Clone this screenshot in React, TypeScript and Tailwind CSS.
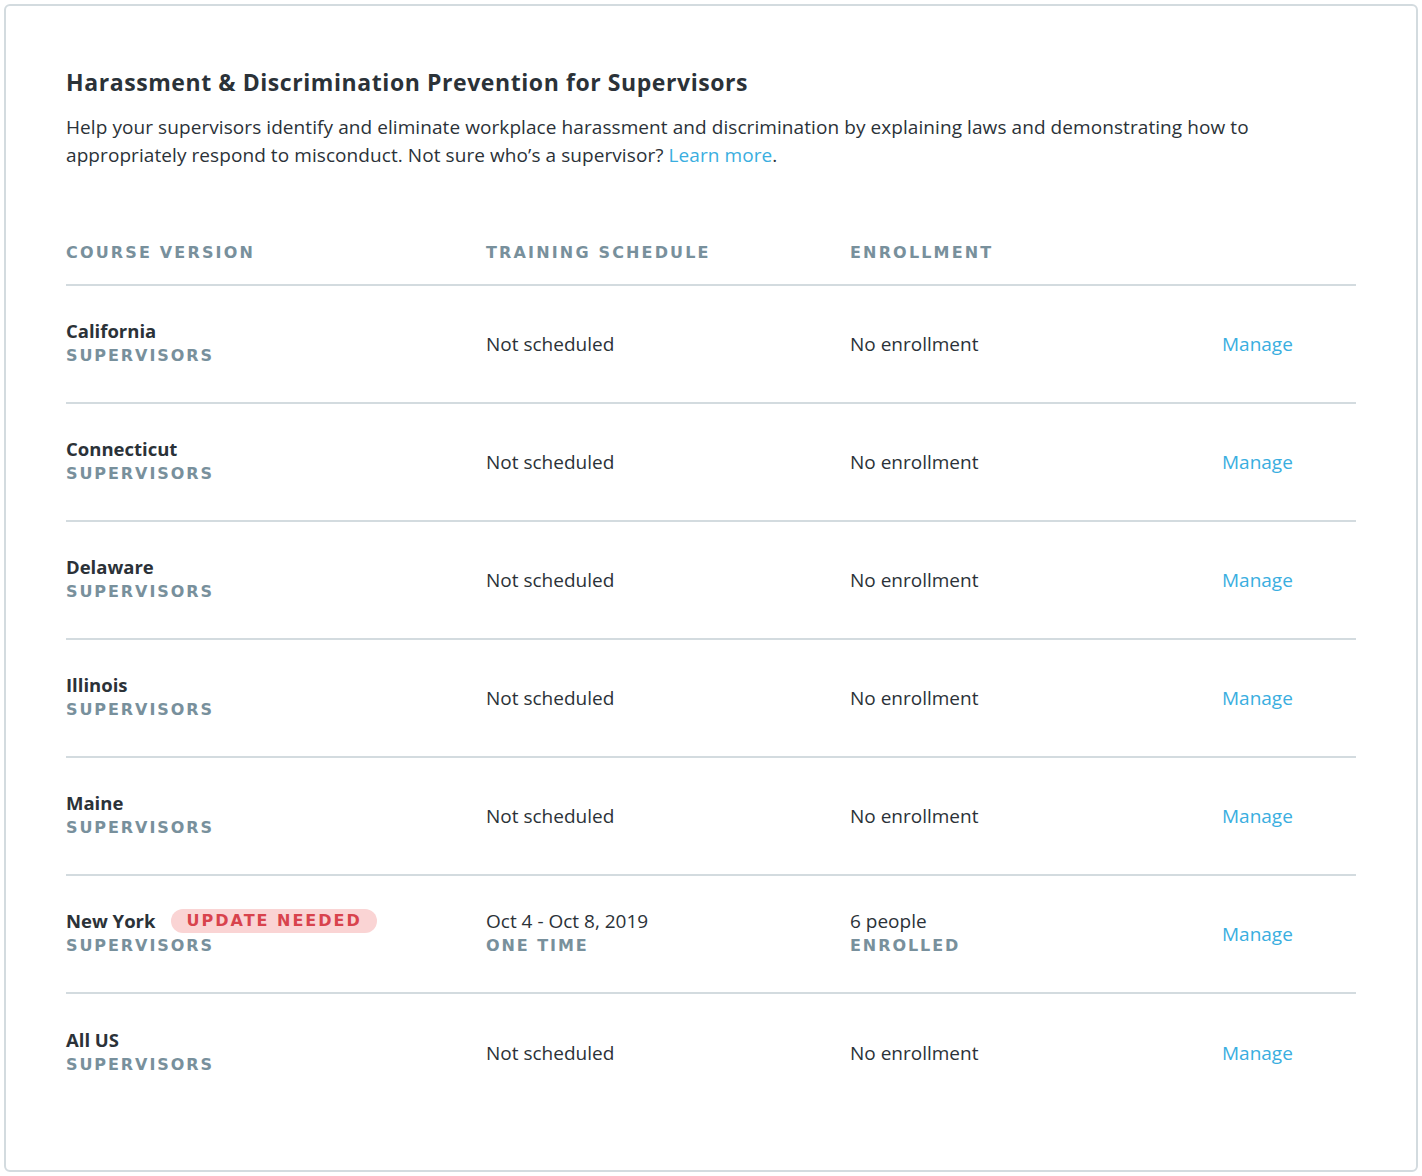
import React from "react";

type Row = {
  name: string;
  badge?: string;
  schedule: string;
  scheduleSub?: string;
  enroll: string;
  enrollSub?: string;
};

const rows: Row[] = [
  { name: "California", schedule: "Not scheduled", enroll: "No enrollment" },
  { name: "Connecticut", schedule: "Not scheduled", enroll: "No enrollment" },
  { name: "Delaware", schedule: "Not scheduled", enroll: "No enrollment" },
  { name: "Illinois", schedule: "Not scheduled", enroll: "No enrollment" },
  { name: "Maine", schedule: "Not scheduled", enroll: "No enrollment" },
  {
    name: "New York",
    badge: "UPDATE NEEDED",
    schedule: "Oct 4 - Oct 8, 2019",
    scheduleSub: "ONE TIME",
    enroll: "6 people",
    enrollSub: "ENROLLED",
  },
  { name: "All US", schedule: "Not scheduled", enroll: "No enrollment" },
];

const caps = "font-['DejaVu_Sans',sans-serif] font-bold";
const sub = caps + " text-[16px] tracking-[0.12em] text-[#78909c] leading-[22px]";

function Cell({ main, subText, bold }: { main: React.ReactNode; subText?: string; bold?: boolean }) {
  if (!subText) {
    return <div className="leading-[26px]">{main}</div>;
  }
  return (
    <div className="mb-[5px]">
      <div className={"leading-[28px] " + (bold ? "font-bold text-[18.5px]" : "")}>{main}</div>
      <div className={sub}>{subText}</div>
    </div>
  );
}

export default function App() {
  return (
    <div className="min-h-[1176px] bg-white p-[4px] font-['Open_Sans',sans-serif] text-[#2b3238]">
      <div className="h-[1168px] rounded-[6px] border-2 border-[#d3dbdf] px-[60px] pt-[61px]">
        <h1 className="text-[23px] font-bold leading-[30px] tracking-[0.025em]">
          Harassment &amp; Discrimination Prevention for Supervisors
        </h1>
        <p className="mt-[16px] text-[19px] leading-[28px] tracking-[0.004em]">
          Help your supervisors identify and eliminate workplace harassment and discrimination by explaining laws and demonstrating how to appropriately respond to misconduct. Not sure who’s a supervisor?{" "}
          <span className="text-[#3aaee0]">Learn more</span>.
        </p>

        <div className={"mt-[73px] flex h-[44px] items-start border-b-2 border-[#d3dbdf] text-[16px] tracking-[0.135em] text-[#78909c] " + caps}>
          <div className="w-[420px] leading-[22px]">COURSE VERSION</div>
          <div className="w-[364px] leading-[22px]">TRAINING SCHEDULE</div>
          <div className="w-[372px] leading-[22px]">ENROLLMENT</div>
          <div className="flex-1" />
        </div>

        {rows.map((r, i) => (
          <div
            key={r.name}
            className={
              "flex h-[118px] items-center text-[19px] " +
              (i < rows.length - 1 ? "border-b-2 border-[#d3dbdf]" : "")
            }
          >
            <div className="w-[420px]">
              <Cell
                bold
                subText="SUPERVISORS"
                main={
                  <span className="flex items-center gap-[16px]">
                    <span>{r.name}</span>
                    {r.badge && (
                      <span className={"rounded-full bg-[#fad4d4] px-[15px] text-[16px] leading-[24px] tracking-[0.125em] text-[#d8434d] " + caps}>
                        {r.badge}
                      </span>
                    )}
                  </span>
                }
              />
            </div>
            <div className="w-[364px]">
              <Cell main={r.schedule} subText={r.scheduleSub} />
            </div>
            <div className="w-[372px]">
              <Cell main={r.enroll} subText={r.enrollSub} />
            </div>
            <div className="flex-1 leading-[26px] text-[#3aaee0]">Manage</div>
          </div>
        ))}
      </div>
    </div>
  );
}
